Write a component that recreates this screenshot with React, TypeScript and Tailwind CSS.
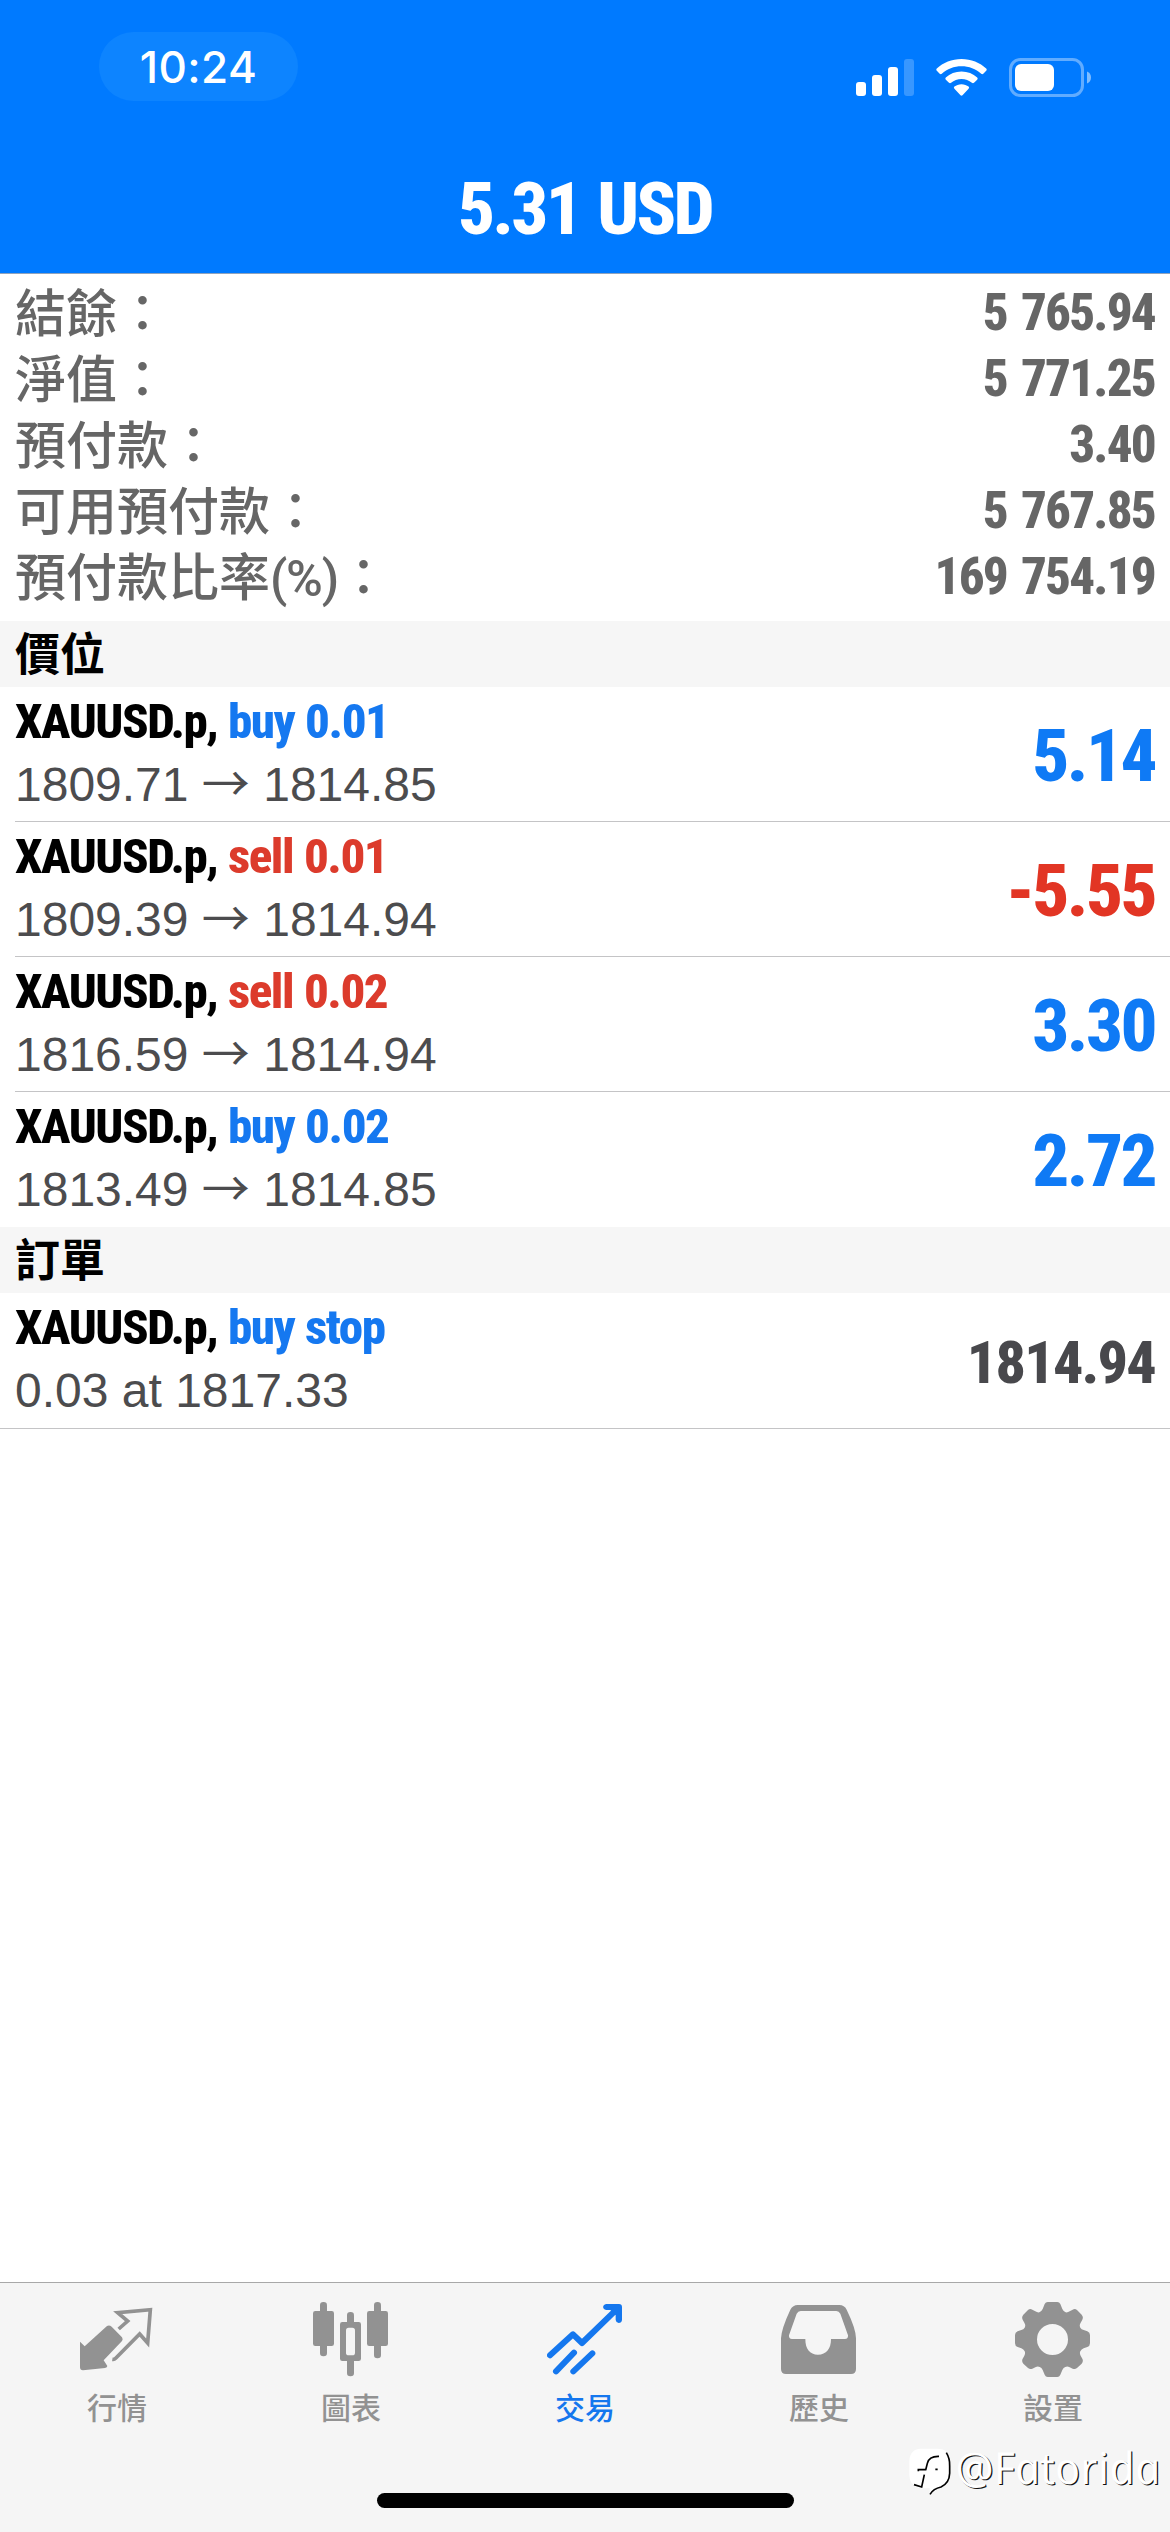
import type { ReactNode } from "react";

const summary = [
    { label: "結餘", value: "5 765.94" },
    { label: "淨值", value: "5 771.25" },
    { label: "預付款", value: "3.40" },
    { label: "可用預付款", value: "5 767.85" },
    { label: "預付款比率", unit: "(%)", value: "169 754.19" },
];

const positions = [
    { symbol: "XAUUSD.p,", side: "buy", volume: "0.01", open: "1809.71", current: "1814.85", profit: "5.14" },
    { symbol: "XAUUSD.p,", side: "sell", volume: "0.01", open: "1809.39", current: "1814.94", profit: "-5.55" },
    { symbol: "XAUUSD.p,", side: "sell", volume: "0.02", open: "1816.59", current: "1814.94", profit: "3.30" },
    { symbol: "XAUUSD.p,", side: "buy", volume: "0.02", open: "1813.49", current: "1814.85", profit: "2.72" },
];

function StatusBar() {
    return (
        <div className="flex justify-between items-start h-[165px] pt-8 pl-[99px] pr-[79px]">
            <div className="flex items-center justify-center w-[199px] h-[69px] rounded-full bg-[#0d84ff] font-['Inter',sans-serif] font-medium text-[44px] leading-none tracking-[0.01em]">
                10:24
            </div>
            <div className="flex items-center gap-[22px] h-[39px] mt-[26px]">
                <svg className="w-[58px] h-[39px]" viewBox="0 0 58 39" fill="#fff">
                    <rect x="0" y="24" width="10" height="14" rx="3" />
                    <rect x="16" y="17" width="10" height="21" rx="3" />
                    <rect x="32" y="9" width="10" height="29" rx="3" />
                    <rect x="48" y="1" width="10" height="37" rx="3" opacity="0.22" />
                </svg>
                <svg className="w-[51px] h-[39px]" viewBox="0 0 51 39" fill="#fff">
                    <path d="M25.500 1C35 1 44 4.600 50.200 10.600Q51.200 11.700 50.200 12.800L47.300 15.700Q46.300 16.600 45.200 15.700C39.800 10.700 33 8.200 25.500 8.200S11.200 10.700 5.800 15.700Q4.700 16.600 3.700 15.700L.8 12.800Q-.2 11.700 .8 10.600C7 4.600 16 1 25.500 1Z" />
                    <path d="M25.500 13.500C31.700 13.500 37 15.800 41.200 19.500Q42.200 20.600 41.200 21.700L38 24.800Q37 25.700 35.900 24.800C33 22.300 29.500 20.900 25.500 20.900S18 22.300 15.100 24.800Q14 25.700 13 24.800L9.800 21.700Q8.800 20.600 9.800 19.500C14 15.800 19.300 13.500 25.500 13.500Z" />
                    <path d="M25.500 26.200C28.300 26.200 30.700 27.100 32.600 28.600Q33.700 29.700 32.600 30.800L26.500 37.300Q25.500 38.200 24.500 37.300L18.400 30.800Q17.300 29.700 18.400 28.600C20.300 27.100 22.700 26.200 25.500 26.200Z" />
                </svg>
                <svg className="w-[82px] h-[39px]" viewBox="0 0 82 39">
                    <rect x="1.500" y="1.500" width="72" height="36" rx="10" fill="none" stroke="#fff" strokeOpacity="0.38" strokeWidth="3" />
                    <rect x="6" y="6" width="39" height="27" rx="6" fill="#fff" />
                    <path d="M78 13.500C80.600 14.500 82 16.800 82 19.500S80.600 24.500 78 25.500Z" fill="#fff" fillOpacity="0.5" />
                </svg>
            </div>
        </div>
    );
}

function SectionTitle({ children }: { children: ReactNode }) {
    return (
        <div className="h-[66px] px-[15px] bg-[#f6f6f6] text-black font-['Noto_Sans_CJK_TC',sans-serif] font-bold text-[45px] leading-[62px]">
            {children}
        </div>
    );
}

function RowTitle({ symbol, action, color }: { symbol: string; action: string; color: string }) {
    return (
        <div className="flex h-[60px] leading-[60px] font-['Roboto',sans-serif] font-extrabold [font-stretch:75%] text-[49px]">
            <span className="w-[213px] text-black tracking-[-0.03em]">{symbol}</span>
            <span className={"tracking-[-0.03em] [word-spacing:1px] " + color}>{action}</span>
        </div>
    );
}

function Tab({ label, active, children }: { label: string; active?: boolean; children: ReactNode }) {
    return (
        <div className={active ? "flex flex-col items-center text-[#1577ee]" : "flex flex-col items-center text-[#929292]"}>
            <svg className="w-[76px] h-[76px]" viewBox="0 0 228 228" fill="currentColor">
                {children}
            </svg>
            <span className="mt-[7px] h-[44px] leading-[44px] text-[30px] font-medium font-['Noto_Sans_CJK_TC',sans-serif]">
                {label}
            </span>
        </div>
    );
}

export default function App() {
    return (
        <div className="relative flex flex-col w-[1170px] h-[2532px] bg-white overflow-hidden">
            {/* Header */}
            <header className="h-[274px] bg-[#007aff] text-white border-b border-[#8fa3bd]">
                <StatusBar />
                <h1 className="h-[88px] leading-[88px] text-center text-[73px] font-['Roboto',sans-serif] font-extrabold [font-stretch:75%] tracking-[-0.037em] [word-spacing:3px]">
                    5.31 USD
                </h1>
            </header>

            <main className="flex-1">
                {/* Account summary */}
                <div className="h-[347px] pt-[6px] px-[15px] text-[#666666]">
                    {summary.map((item) => (
                        <div key={item.label} className="flex justify-between h-[66px]">
                            <span className="font-['Noto_Sans_CJK_TC',sans-serif] font-medium text-[51px] leading-[60px]">
                                {item.label}
                                {item.unit && (
                                    <span className="font-['Roboto'] text-[50px] leading-none tracking-[-0.025em]">{item.unit}</span>
                                )}
                                ：
                            </span>
                            <span className="font-['Roboto',sans-serif] font-extrabold [font-stretch:75%] text-[51px] leading-[66px] tracking-[-0.035em] [word-spacing:4px]">
                                {item.value}
                            </span>
                        </div>
                    ))}
                </div>

                {/* Positions */}
                <SectionTitle>價位</SectionTitle>
                {positions.map((item, i) => (
                    <div
                        key={i}
                        className={
                            i < positions.length - 1
                                ? "flex justify-between h-[135px] ml-[15px] pr-[15px] border-b border-[#c4c4c6]"
                                : "flex justify-between h-[135px] ml-[15px] pr-[15px]"
                        }
                    >
                        <div className="pt-[5px]">
                            <RowTitle
                                symbol={item.symbol}
                                action={item.side + " " + item.volume}
                                color={item.side === "buy" ? "text-[#1578f0]" : "text-[#dc3b2c]"}
                            />
                            <div className="h-[64px] mt-px leading-[64px] text-[48px] text-[#4c4c4e] font-['Liberation_Sans',sans-serif]">
                                {item.open} <span className="font-['Noto_Sans_CJK_TC'] leading-none">→</span> {item.current}
                            </div>
                        </div>
                        <span
                            className={
                                (item.profit.startsWith("-") ? "text-[#e23524]" : "text-[#0f7af5]") +
                                " leading-[138px] text-[73px] font-['Roboto',sans-serif] font-extrabold [font-stretch:75%] tracking-[-0.035em]"
                            }
                        >
                            {item.profit}
                        </span>
                    </div>
                ))}

                {/* Orders */}
                <SectionTitle>訂單</SectionTitle>
                <div className="flex justify-between h-[136px] px-[15px] border-b border-[#c4c4c6]">
                    <div className="pt-[5px]">
                        <RowTitle symbol="XAUUSD.p," action="buy stop" color="text-[#1578f0]" />
                        <div className="h-[64px] mt-px leading-[64px] text-[48px] text-[#4c4c4e] font-['Liberation_Sans',sans-serif]">
                            0.03 at 1817.33
                        </div>
                    </div>
                    <span className="leading-[139px] text-[60px] text-[#48484c] font-['Roboto',sans-serif] font-extrabold [font-stretch:75%] tracking-[-0.03em]">
                        1814.94
                    </span>
                </div>
            </main>

            {/* Tab bar */}
            <nav className="h-[250px] border-t border-[#a8a8a8] bg-[#f5f5f5]">
                <div className="grid grid-cols-5 pt-[18px]">
                    <Tab label="行情">
                        <path d="M3 122L17 136L84 75Q91 71 98 77L129 109Q133 115 129 120L74 178L85 195Q85 200 78 201L12 208Q3 208 3 199Z" />
                        <path d="M119 84L146 60L116 35L214 26L206 126L182 99L110 172Q106 176 100 175" fill="none" stroke="currentColor" strokeWidth="11" />
                    </Tab>
                    <Tab label="圖表">
                        <rect x="21" y="3" width="21" height="163" rx="10" />
                        <rect x="0" y="30" width="63" height="105" rx="7" />
                        <rect x="102" y="33" width="21" height="193" rx="10" />
                        <rect x="81" y="63" width="63" height="117" rx="7" />
                        <rect x="99" y="80" width="27" height="83" rx="8" fill="#f5f5f5" />
                        <rect x="183" y="3" width="21" height="169" rx="10" />
                        <rect x="162" y="30" width="63" height="105" rx="7" />
                    </Tab>
                    <Tab label="交易" active>
                        <g fill="none" stroke="currentColor" strokeWidth="18" strokeLinecap="round" strokeLinejoin="round">
                            <path d="M9 163L78 100L105 126L212 22" />
                            <path d="M27 211L81 155" />
                            <path d="M79 211L136 157" />
                        </g>
                        <path d="M177 9H216Q225 9 225 18V57Q224 66 215 66Q207 65 206 57V43L190 27H177Q169 26 168 18Q169 10 177 9Z" />
                    </Tab>
                    <Tab label="歷史">
                        <path
                            fillRule="evenodd"
                            d="M50 12H175Q190 12 197 26Q225 84 225 112V204Q225 219 210 219H15Q0 219 0 204V112Q1 84 28 26Q36 12 50 12ZM59 30Q51 30 47 38L24 103Q23 114 33 114H73C73 144 86 161 111 161S150 144 150 114H192Q202 114 201 103L178 38Q174 30 166 30Z"
                        />
                    </Tab>
                    <Tab label="設置">
                        <path
                            fillRule="evenodd"
                            d="M98 3H127Q133 3 136 9L142 24Q145 31 152 34Q158 35 164 31L173 26Q180 22 186 27L200 41Q206 48 202 56L197 65Q192 73 196 80Q199 85 206 87L217 91Q225 94 225 102V127Q225 135 217 138L206 142Q199 145 196 151Q193 157 197 164L202 173Q206 181 200 188L186 201Q180 206 173 203L164 199Q157 195 151 198Q145 200 142 207L136 221Q133 228 127 228H98Q92 228 89 221L83 207Q80 200 74 198Q68 195 61 199L52 203Q45 206 39 201L25 188Q19 181 23 173L28 164Q32 157 29 151Q26 145 19 142L8 138Q0 135 0 127V102Q0 94 8 91L19 87Q26 85 29 80Q33 73 28 65L23 56Q19 48 25 41L39 27Q45 22 52 26L61 31Q67 35 73 34Q80 31 83 24L89 9Q92 3 98 3ZM112.500 69A46.500 46.500 0 1 0 112.500 162A46.500 46.500 0 1 0 112.500 69Z"
                        />
                    </Tab>
                </div>
                <div className="mx-auto mt-[65px] w-[417px] h-[15px] rounded-full bg-black" />
            </nav>

            {/* Watermark over the tab bar */}
            <div className="absolute left-[909px] top-[2446px] flex items-start">
                <svg className="w-[46px] h-[52px]" viewBox="0 0 138 156" fill="none">
                    <path d="M35 8H85Q123 8 123 48V80Q121 116 96 122Q78 126 69 137Q62 144 61 147Q63 133 62 126Q42 128 28 126Q2 118 1 88V45Q2 10 35 8Z" fill="#fff" />
                    <path d="M112 20Q123 38 122 60V82Q121 112 96 123Q73 128 63 145" stroke="#000" strokeWidth="5" />
                    <path d="M90 31Q60 30 55 52L50 72M28 76V71H52M79 70H86M46 86L38 123L15 116" stroke="#000" strokeWidth="5" />
                </svg>
                <span className="mt-[-7px] leading-[56px] text-[44px] tracking-[0.008em] italic skew-x-12 text-white font-['Open_Sans',sans-serif] [text-shadow:1px_1px_0px_#111]">
                    @Fatorida
                </span>
            </div>
        </div>
    );
}
